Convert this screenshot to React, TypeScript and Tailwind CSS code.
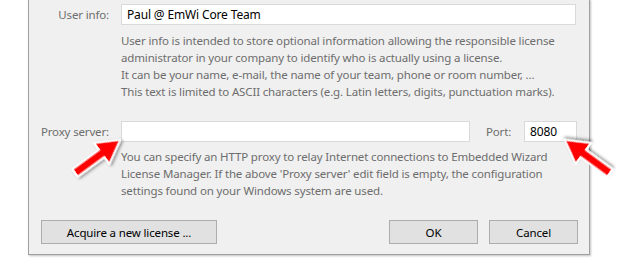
import React from "react";

const font = { fontFamily: '"Noto Sans", "Open Sans", sans-serif' };

function Arrow({ x, y, angle }: { x: number; y: number; angle: number }) {
  return (
    <g transform={`translate(${x},${y}) rotate(${angle})`} filter="url(#shadow)">
      <polygon
        points="0,-4.5 33,-4.5 33,-13 56,0 33,13 33,4.5 0,4.5"
        fill="#ff0000"
        stroke="#ffffff"
        strokeWidth="2"
        strokeLinejoin="round"
      />
    </g>
  );
}

export default function App() {
  return (
    <div className="relative w-[618px] h-[258px] bg-white overflow-hidden" style={font}>
      <div className="ml-[28px] w-[562px] h-[256px] -mt-[1px] bg-[#f0f0f0] border border-t-0 border-[#a0a0a0] shadow-[1px_1px_2px_rgba(0,0,0,0.25)] flex flex-col text-[11.5px] tracking-[-0.15px] leading-[17px]">
        {/* User info row */}
        <div className="flex items-center mt-[5px] h-[21px]">
          <div className="w-[80px] text-right text-[#6d6d6d]">User info:</div>
          <div className="ml-[12px] w-[455px] h-[21px] bg-white border border-[#d9d9d9] flex items-center px-[5px] text-black text-[12px]">
            Paul @ EmWi Core Team
          </div>
        </div>
        <div className="ml-[92px] mt-[7px] text-[#6d6d6d] whitespace-nowrap">
          <div>User info is intended to store optional information allowing the responsible license</div>
          <div>administrator in your company to identify who is actually using a license.</div>
          <div>It can be your name, e-mail, the name of your team, phone or room number, ...</div>
          <div>This text is limited to ASCII characters (e.g. Latin letters, digits, punctuation marks).</div>
        </div>

        {/* Proxy row */}
        <div className="flex items-center mt-[21px] h-[21px]">
          <div className="w-[80px] text-right text-[#6d6d6d]">Proxy server:</div>
          <div className="ml-[12px] w-[349px] h-[21px] bg-white border border-[#d9d9d9]" />
          <div className="ml-[16px] w-[38px] text-[#6d6d6d]">Port:</div>
          <div className="w-[53px] h-[21px] bg-white border border-[#d9d9d9] flex items-center px-[5px] text-black text-[12px]">
            8080
          </div>
        </div>
        <div className="ml-[92px] mt-[6px] text-[#6d6d6d] whitespace-nowrap">
          <div>You can specify an HTTP proxy to relay Internet connections to Embedded Wizard</div>
          <div>License Manager. If the above 'Proxy server' edit field is empty, the configuration</div>
          <div>settings found on your Windows system are used.</div>
        </div>

        {/* Buttons */}
        <div className="flex items-center mt-[21px] ml-[12px]">
          <button className="w-[176px] h-[24px] bg-[#e1e1e1] border border-[#adadad] text-black">
            Acquire a new license ...
          </button>
          <div className="flex-1" />
          <button className="w-[89px] h-[24px] bg-[#e1e1e1] border border-[#adadad] text-black">
            OK
          </button>
          <button className="ml-[11px] mr-[11px] w-[89px] h-[24px] bg-[#e1e1e1] border border-[#adadad] text-black">
            Cancel
          </button>
        </div>
      </div>

      <svg className="absolute left-0 top-0 pointer-events-none" width="618" height="258">
        <defs>
          <filter id="shadow" x="-50%" y="-50%" width="200%" height="200%">
            <feDropShadow dx="1" dy="2" stdDeviation="1.5" floodColor="#000" floodOpacity="0.4" />
          </filter>
        </defs>
        <Arrow x={75} y={173} angle={-36.25} />
        <Arrow x={610} y={173} angle={-143.75} />
      </svg>
    </div>
  );
}
